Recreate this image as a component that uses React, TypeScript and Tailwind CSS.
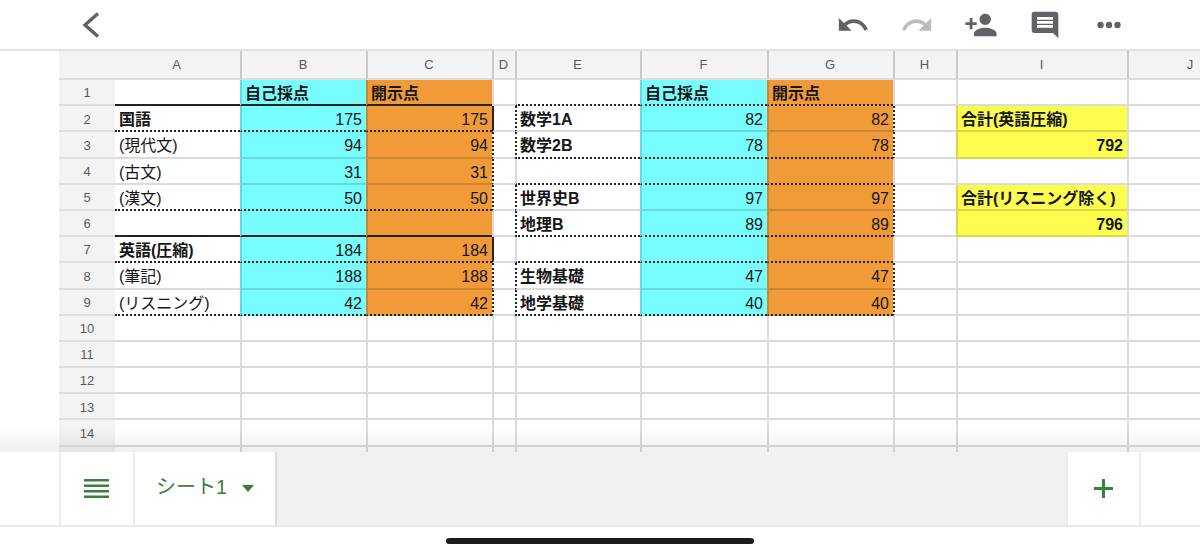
import React from "react";

type Side = "g" | "s" | "d";
type Fill = "w" | "c" | "o" | "y";
type Cell = { t?: string; b?: boolean; r?: boolean };

const bottomCls: Record<Side, string> = {
  g: "border-b-2 border-b-[#00000024]",
  s: "border-b-2 border-b-[#222222]",
  d: "border-b-2 border-b-[#222222] [border-bottom-style:dotted]",
};
const leftCls: Record<Side, string> = {
  g: "border-l-2 border-l-[#00000024]",
  s: "border-l-2 border-l-[#222222]",
  d: "border-l-2 border-l-[#222222] [border-left-style:dotted]",
};
const fillCls: Record<Fill, string> = {
  w: "bg-white",
  c: "bg-[#78fdff]",
  o: "bg-[#f09b37]",
  y: "bg-[#fdfd50]",
};

const cols = ["A", "B", "C", "D", "E", "F", "G", "H", "I", "J"];

const L = (t: string): Cell => ({ t });
const B = (t: string): Cell => ({ t, b: true });
const N = (t: string): Cell => ({ t, r: true });
const BN = (t: string): Cell => ({ t, b: true, r: true });

const content: Record<number, Record<string, Cell>> = {
  1: { B: B("自己採点"), C: B("開示点"), F: B("自己採点"), G: B("開示点") },
  2: { A: B("国語"), B: N("175"), C: N("175"), E: B("数学1A"), F: N("82"), G: N("82"), I: B("合計(英語圧縮)") },
  3: { A: L("(現代文)"), B: N("94"), C: N("94"), E: B("数学2B"), F: N("78"), G: N("78"), I: BN("792") },
  4: { A: L("(古文)"), B: N("31"), C: N("31") },
  5: { A: L("(漢文)"), B: N("50"), C: N("50"), E: B("世界史B"), F: N("97"), G: N("97"), I: B("合計(リスニング除く)") },
  6: { E: B("地理B"), F: N("89"), G: N("89"), I: BN("796") },
  7: { A: B("英語(圧縮)"), B: N("184"), C: N("184") },
  8: { A: L("(筆記)"), B: N("188"), C: N("188"), E: B("生物基礎"), F: N("47"), G: N("47") },
  9: { A: L("(リスニング)"), B: N("42"), C: N("42"), E: B("地学基礎"), F: N("40"), G: N("40") },
};

function fillOf(col: string, row: number): Fill {
  if (row <= 9 && (col === "B" || col === "F")) return "c";
  if (row <= 9 && (col === "C" || col === "G")) return "o";
  if (col === "I" && [2, 3, 5, 6].includes(row)) return "y";
  return "w";
}

function bottomOf(col: string, row: number): Side {
  if (["A", "B", "C"].includes(col)) {
    if (row === 1 || row === 6) return "s";
    if (row === 2 || row === 5 || row === 7 || row === 9) return "d";
  }
  if (["E", "F", "G"].includes(col)) {
    if ([1, 3, 4, 6, 7, 9].includes(row)) return "d";
  }
  return "g";
}

function leftOf(col: string, row: number): Side {
  if (col === "D") {
    if (row === 2 || row === 7) return "s";
    if ([3, 4, 5, 8, 9].includes(row)) return "d";
  }
  if ((col === "E" || col === "H") && [2, 3, 5, 6, 8, 9].includes(row)) return "d";
  return "g";
}

const rows = Array.from({ length: 15 }, (_, i) => i + 1);

function Icon({ d, className }: { d: string; className: string }) {
  return (
    <svg viewBox="0 0 24 24" className={className} fill="currentColor">
      <path d={d} />
    </svg>
  );
}

export default function App() {
  return (
    <div className="w-[1200px] h-[554px] flex flex-col overflow-hidden bg-white font-['Liberation_Sans','Noto_Sans_CJK_JP',sans-serif] text-[16px] text-[#161616]">
      {/* top bar */}
      <header className="h-[51px] shrink-0 flex items-center justify-between border-b-2 border-b-[#e2e2e2] pl-[82px] pr-[74px]">
        <svg viewBox="0 0 18 26" className="w-[18px] h-[26px] text-[#5f6368]" fill="none" stroke="currentColor" strokeWidth="3.4">
          <path d="M16 1.5 3 13l13 11.500" />
        </svg>
        <div className="flex items-center gap-[30px]">
          <Icon className="w-[34px] h-[34px] text-[#5f6368]" d="M12.5 8c-2.650 0-5.050.99-6.900 2.600L2 7v9h9l-3.620-3.620c1.390-1.160 3.160-1.880 5.120-1.880 3.540 0 6.550 2.310 7.600 5.500l2.370-.78C21.080 11.030 17.150 8 12.500 8z" />
          <Icon className="w-[34px] h-[34px] text-[#bdbdbd]" d="M18.400 10.600C16.550 8.990 14.150 8 11.500 8c-4.650 0-8.580 3.030-9.960 7.220L3.900 16c1.050-3.190 4.050-5.500 7.600-5.500 1.950 0 3.730.72 5.120 1.880L13 16h9V7l-3.600 3.600z" />
          <Icon className="w-[34px] h-[34px] text-[#5f6368]" d="M15 12c2.210 0 4-1.790 4-4s-1.790-4-4-4-4 1.790-4 4 1.790 4 4 4zm-9-2V7H4v3H1v2h3v3h2v-3h3v-2H6zm9 4c-2.670 0-8 1.340-8 4v2h16v-2c0-2.660-5.330-4-8-4z" />
          <Icon className="w-[32px] h-[32px] text-[#5f6368] mx-[1px]" d="M21.990 4c0-1.100-.89-2-1.990-2H4c-1.100 0-2 .9-2 2v12c0 1.100.9 2 2 2h14l4 4-.01-18zM18 14H6v-2h12v2zm0-3H6V9h12v2zm0-3H6V6h12v2z" />
          <svg viewBox="0 0 34 34" className="w-[34px] h-[34px] text-[#5f6368]" fill="currentColor">
            <circle cx="8.500" cy="17" r="3.200" />
            <circle cx="17" cy="17" r="3.200" />
            <circle cx="25.500" cy="17" r="3.200" />
          </svg>
        </div>
      </header>

      {/* sheet */}
      <div className="relative h-[401px] shrink-0 overflow-hidden pl-[59px]">
        <div className="w-[1267px] grid grid-cols-[56px_125px_126px_126px_23px_125px_127px_126px_63px_171px_126px] grid-rows-[29px_repeat(15,26.2px)]">
          <div className="bg-[#f3f3f3] border-b-2 border-b-[#dedede]" />
          {cols.map((c) => (
            <div
              key={c}
              className={[
                "bg-[#f3f3f3] border-b-2 border-b-[#dedede] flex items-center justify-center pr-[2px] text-[13px] text-[#5a5a5a]",
                c === "A" ? "" : "border-l-2 border-l-[#c9c9c9]",
              ].join(" ")}
            >
              {c}
            </div>
          ))}
          {rows.map((r) => (
            <React.Fragment key={r}>
              <div className="bg-[#f3f3f3] border-b-2 border-b-[#dedede] flex items-center justify-center pt-[2px] text-[13px] text-[#5a5a5a]">
                {r < 15 ? r : null}
              </div>
              {cols.map((c) => {
                const cell = content[r]?.[c];
                return (
                  <div
                    key={c}
                    className={[
                      "flex items-center min-w-0 whitespace-nowrap pr-1 pt-[4px]",
                      c === "A" ? "pl-1" : "pl-[3px]",
                      fillCls[fillOf(c, r)],
                      bottomCls[bottomOf(c, r)],
                      c === "A" ? "" : leftCls[leftOf(c, r)],
                      cell?.r ? "justify-end" : "justify-start",
                      cell?.b ? "font-bold" : "font-normal",
                    ].join(" ")}
                  >
                    {cell?.t}
                  </div>
                );
              })}
            </React.Fragment>
          ))}
        </div>
        <div className="absolute left-0 right-0 bottom-0 h-[24px] bg-gradient-to-b from-transparent to-[#00000010] pointer-events-none" />
      </div>

      {/* tab bar */}
      <div className="h-[75px] shrink-0 flex border-b-2 border-b-[#e8e8e8] pl-[59px] text-[#3a7f3f]">
        <div className="w-[76px] shrink-0 flex items-center justify-center pr-[1px] border-l-2 border-r-2 border-[#ececec] bg-white">
          <svg viewBox="0 0 25 20" className="w-[25px] h-[20px]" fill="currentColor">
            <rect x="0" y="0" width="25" height="2.500" />
            <rect x="0" y="5.500" width="25" height="2.500" />
            <rect x="0" y="11" width="25" height="2.500" />
            <rect x="0" y="16.500" width="25" height="2.500" />
          </svg>
        </div>
        <div className="w-[142px] shrink-0 flex items-center pl-[21px] gap-[15px] border-r-2 border-r-[#dcdcdc] bg-white">
          <span className="text-[20px] leading-none -mt-[4px]">シート1</span>
          <svg viewBox="0 0 12 7" className="w-[12px] h-[7px] -mt-[1px]" fill="currentColor">
            <path d="M0 0h12L6 7z" />
          </svg>
        </div>
        <div className="flex-1 bg-[#f0f1f3]" />
        <div className="w-[75px] shrink-0 flex items-center justify-center border-l-2 border-r-2 border-[#ececec] bg-white">
          <svg viewBox="0 0 19 19" className="w-[19px] h-[19px]" fill="currentColor">
            <path d="M8 0h3v8h8v3h-8v8H8v-8H0V8h8z" />
          </svg>
        </div>
        <div className="w-[59px] shrink-0 bg-white" />
      </div>

      {/* home indicator */}
      <div className="flex-1 flex items-center justify-center">
        <div className="w-[308px] h-[6px] rounded-full bg-[#1c1c1e]" />
      </div>
    </div>
  );
}
